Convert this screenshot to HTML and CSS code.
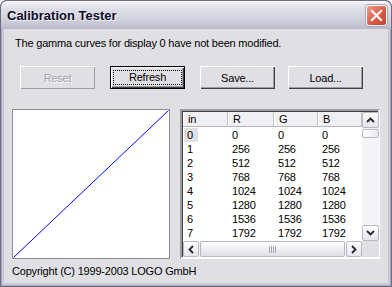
FILE: index.html
```html
<!DOCTYPE html>
<html lang="en">
<head>
<meta charset="UTF-8">
<title>Calibration Tester</title>
<link rel="stylesheet" href="styles.css">
</head>
<body>

<div class="window">
  <div class="titlebar">
    <span class="title">Calibration Tester</span>
    <span class="close">
      <svg width="13" height="13" viewBox="0 0 13 13"><path d="M2 2 L11 11 M11 2 L2 11" stroke="#fff" stroke-width="2.2" stroke-linecap="square"/></svg>
    </span>
  </div>

  <div class="client">
    <p class="msg">The gamma curves for display 0 have not been modified.</p>

    <div class="buttons">
      <button class="btn" disabled>Reset</button>
      <button class="btn default"><span class="focus">Refresh</span></button>
      <button class="btn">Save...</button>
      <button class="btn last">Load...</button>
    </div>

    <div class="main">
      <div class="graph">
        <svg width="156" height="148" viewBox="0 0 156 148"><line x1="0.5" y1="147.5" x2="155.5" y2="0.5" stroke="#0000ff" stroke-width="1"/></svg>
      </div>

      <div class="list">
        <div class="grid">
          <div class="rows" id="rows">
            <div class="row head"><span>in</span><span>R</span><span>G</span><span>B</span></div>
          </div>
          <div class="vscroll">
            <div class="sbtn"><svg width="9" height="6" viewBox="0 0 9 6"><path d="M1 5 L4.5 1.5 L8 5" fill="none" stroke="#26262e" stroke-width="1.8"/></svg></div>
            <div class="vthumb"></div>
            <div class="vtrack"></div>
            <div class="sbtn"><svg width="9" height="6" viewBox="0 0 9 6"><path d="M1 1 L4.5 4.5 L8 1" fill="none" stroke="#26262e" stroke-width="1.8"/></svg></div>
          </div>
          <div class="hscroll">
            <div class="sbtn"><svg width="6" height="9" viewBox="0 0 6 9"><path d="M5 1 L1.5 4.5 L5 8" fill="none" stroke="#26262e" stroke-width="1.8"/></svg></div>
            <div class="hthumb"><span class="grip"></span></div>
            <div class="sbtn"><svg width="6" height="9" viewBox="0 0 6 9"><path d="M1 1 L4.5 4.5 L1 8" fill="none" stroke="#26262e" stroke-width="1.8"/></svg></div>
          </div>
          <div class="corner"></div>
        </div>
      </div>
    </div>

    <p class="copy">Copyright (C) 1999-2003 LOGO GmbH</p>
  </div>
</div>

<script>
  var rows = document.getElementById("rows");
  for (var i = 0; i < 8; i++) {
    var v = i * 256;
    var html = "<div class=\"row\"><span" + (i == 0 ? " class=\"sel\"" : "") + ">" + i + "</span>";
    html += "<span>" + v + "</span><span>" + v + "</span><span>" + v + "</span></div>";
    rows.innerHTML += html;
  }
</script>

</body>
</html>
```

FILE: styles.css
```css
body {
  margin: 0;
  font-family: "Liberation Sans", Arial, sans-serif;
  font-size: 11px;
  letter-spacing: -0.2px;
  color: #000;
}
.window {
  width: 392px;
  height: 287px;
  box-sizing: border-box;
  display: flex;
  flex-direction: column;
  background: #c4c4d4;
  border-radius: 7px 7px 0 0;
  overflow: hidden;
  box-shadow: inset 0 0 0 1px #6c6c84, inset 0 0 0 2px #a4a4b8, inset 0 0 0 3px #d0d0dc;
}
.titlebar {
  height: 29px;
  flex: none;
  display: flex;
  align-items: center;
  justify-content: space-between;
  padding: 0 4px 0 6px;
  border-radius: 7px 7px 0 0;
  border: 1px solid #6c6c84;
  border-bottom: none;
  box-sizing: border-box;
  background: linear-gradient(#ffffff 0, #eeeef3 2px, #dedee6 8px, #d2d2dc 18px, #c0c0cf 26px, #b0b0c2 29px);
}
.title {
  font-weight: bold;
  font-size: 13px;
  letter-spacing: 0;
  color: #0e0e2e;
  text-shadow: 1px 1px 0 #f4f4f8;
  padding-top: 1px;
}
.close {
  width: 21px;
  height: 21px;
  box-sizing: border-box;
  border: 1px solid #fff;
  border-radius: 3px;
  background: linear-gradient(135deg, #f0a090, #dc5a44 55%, #c04430);
  display: flex;
  align-items: center;
  justify-content: center;
  box-shadow: 0 0 0 1px #a8a8b8;
}
.client {
  flex: 1;
  margin: 0 4px 4px;
  background: #e0dfe3;
  padding: 0 8px;
}
.msg {
  margin: 8px 0 0 3px;
  line-height: 13px;
}
.buttons {
  display: flex;
  gap: 15px;
  margin: 16px 0 0 8px;
}
.btn {
  width: 75px;
  height: 23px;
  padding: 0;
  font: inherit;
  letter-spacing: inherit;
  color: #000;
  background: #e0dfe3;
  border: none;
  box-shadow: inset 1px 1px 0 #fff, inset -1px -1px 0 #404040, inset -2px -2px 0 #9d9da1;
}
.btn.last {
  margin-left: -2px;
}
.btn:disabled {
  color: #a0a0a4;
  text-shadow: 1px 1px 0 #fff;
  box-shadow: inset 1px 1px 0 #fff, inset -1px -1px 0 #9d9da1;
}
.btn.default {
  box-shadow: inset 0 0 0 1px #000, inset 1px 1px 0 1px #fff, inset -2px -2px 0 #404040, inset -3px -3px 0 #9d9da1;
}
.focus {
  display: block;
  margin: 4px;
  line-height: 13px;
  outline: 1px dotted #000;
}
.main {
  display: flex;
  gap: 10px;
  margin-top: 20px;
}
.graph {
  width: 158px;
  height: 150px;
  box-sizing: border-box;
  border: 1px solid #8e8f93;
  background: #fff;
}
.graph svg {
  display: block;
}
.list {
  width: 200px;
  height: 150px;
  box-sizing: border-box;
  border: 2px solid;
  border-color: #9d9da1 #fff #fff #9d9da1;
  box-shadow: inset 1px 1px 0 #404040;
  background: #fff;
}
.grid {
  display: grid;
  grid-template-columns: 179px 17px;
  grid-template-rows: 1fr 16px;
  margin: 1px 0 0 1px;
  height: 145px;
}
.rows {
  overflow: hidden;
}
.row {
  display: grid;
  grid-template-columns: 45px 46px 44px 44px;
  height: 14px;
  line-height: 14px;
}
.row span {
  padding-left: 4px;
}
.row .sel {
  background: #e0dfe3;
  width: 11px;
  margin-left: 1px;
  padding-left: 3px;
}
.row.head {
  height: 15px;
  line-height: 15px;
  margin-bottom: 1px;
}
.row.head span {
  background: #f0f0f3;
  padding-left: 5px;
  box-shadow: inset -1px 0 0 #c0c0c8, inset 0 -1px 0 #b4b4bc, inset 1px 0 0 #fff;
}
.vscroll {
  display: flex;
  flex-direction: column;
  background: #f4f4f6;
}
.hscroll {
  display: flex;
  background: #f4f4f6;
}
.sbtn {
  width: 17px;
  height: 16px;
  box-sizing: border-box;
  flex: none;
  border: 1px solid #b8b8c4;
  border-radius: 2px;
  background: linear-gradient(#ffffff, #e4e4ec);
  display: flex;
  align-items: center;
  justify-content: center;
}
.hscroll .sbtn {
  width: 16px;
}
.vthumb {
  height: 7px;
  flex: none;
  margin-top: 1px;
  border: 1px solid #b8b8c4;
  border-radius: 2px;
  background: linear-gradient(90deg, #ffffff, #e8e8ee);
}
.vtrack {
  flex: 1;
}
.hthumb {
  flex: 1;
  margin: 0 1px;
  border: 1px solid #b8b8c4;
  border-radius: 2px;
  background: linear-gradient(#ffffff, #dedee6);
  display: flex;
  align-items: center;
  justify-content: center;
}
.grip {
  width: 7px;
  height: 7px;
  background: repeating-linear-gradient(90deg, #a8a8b4 0 1px, transparent 1px 2px);
}
.corner {
  background: #e0dfe3;
}
.copy {
  margin: 6px 0 0;
  line-height: 13px;
}
```
